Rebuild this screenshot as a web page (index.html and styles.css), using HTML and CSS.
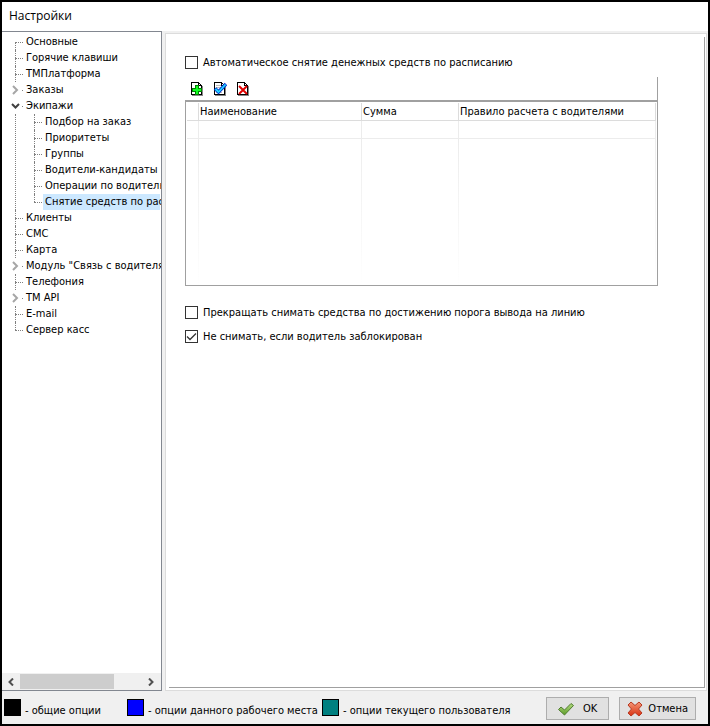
FILE: index.html
```html
<!DOCTYPE html>
<html lang="ru">
<head>
<meta charset="utf-8">
<title>Настройки</title>
<link rel="stylesheet" href="styles.css">
</head>
<body>
<div class="window">
  <header class="titlebar"><h1>Настройки</h1></header>
  <div class="body">
    <nav class="sidebar" aria-label="Разделы">
      <ul class="tree">
        <li><a href="#">Основные</a></li>
        <li><a href="#">Горячие клавиши</a></li>
        <li><a href="#">ТМПлатформа</a></li>
        <li class="parent"><svg class="chev closed" viewBox="0 0 9 10"><path d="M2 1l4 4-4 4"/></svg><a href="#">Заказы</a></li>
        <li class="parent"><svg class="chev" viewBox="0 0 9 10"><path d="M1 3l3.500 3.500L8 3"/></svg><a href="#">Экипажи</a>
          <ul class="branch">
            <li><a href="#">Подбор на заказ</a></li>
            <li><a href="#">Приоритеты</a></li>
            <li><a href="#">Группы</a></li>
            <li><a href="#">Водители-кандидаты</a></li>
            <li><a href="#">Операции по водителю</a></li>
            <li><a class="selected" href="#" aria-current="page">Снятие средств по рас</a></li>
          </ul>
        </li>
        <li><a href="#">Клиенты</a></li>
        <li><a href="#">СМС</a></li>
        <li><a href="#">Карта</a></li>
        <li class="parent"><svg class="chev closed" viewBox="0 0 9 10"><path d="M2 1l4 4-4 4"/></svg><a href="#">Модуль "Связь с водителя</a></li>
        <li><a href="#">Телефония</a></li>
        <li class="parent"><svg class="chev closed" viewBox="0 0 9 10"><path d="M2 1l4 4-4 4"/></svg><a href="#">TM API</a></li>
        <li><a href="#">E-mail</a></li>
        <li><a href="#">Сервер касс</a></li>
      </ul>
      <div class="scrollbar">
        <button type="button" aria-label="Влево"><svg viewBox="0 0 8 8"><path d="M6 0.500L2.500 4L6 7.500"/></svg></button>
        <div class="track"><div class="thumb"></div></div>
        <button type="button" aria-label="Вправо"><svg viewBox="0 0 8 8"><path d="M2 0.500L5.500 4L2 7.500"/></svg></button>
      </div>
    </nav>
    <main class="panel">
      <div class="page">
        <label class="check"><input type="checkbox">Автоматическое снятие денежных средств по расписанию</label>
        <div class="toolbar">
          <button type="button" aria-label="Добавить"><svg viewBox="0 0 14 14" shape-rendering="crispEdges"><path fill="#888" d="M2 13h11v1H2zM12 4h1v10h-1z"/><path fill="#000" d="M1 0h8v1h1v1h1v1h1v10H1z"/><path fill="#fff" d="M2 1h6v3h3v8H2zM9 2h1v1H9z"/><path fill="#008000" d="M5 3h4v3h3v4H9v3H5v-3H2V6h3z"/><path fill="#1f2" d="M6 4h2v3h3v2H8v3H6V9H3V7h3z"/></svg></button>
          <button type="button" aria-label="Изменить"><svg viewBox="0 0 14 14"><g shape-rendering="crispEdges"><path fill="#888" d="M2 13h11v1H2zM12 4h1v10h-1z"/><path fill="#000" d="M1 0h8v1h1v1h1v1h1v10H1z"/><path fill="#fff" d="M2 1h6v3h3v8H2zM9 2h1v1H9z"/><path fill="#bbb" d="M3 3h5v1H3zM3 5h6v1H3zM3 10h6v1H3z"/></g><path fill="none" stroke="#0030d0" stroke-width="3.500" d="M2 6.500l3.500 3.500 7.500-8"/><path fill="none" stroke="#20d8ff" stroke-width="1.800" d="M2.500 7l3 3 7-7.500"/></svg></button>
          <button type="button" aria-label="Удалить"><svg viewBox="0 0 14 14"><g shape-rendering="crispEdges"><path fill="#888" d="M2 13h11v1H2zM12 4h1v10h-1z"/><path fill="#000" d="M1 0h8v1h1v1h1v1h1v10H1z"/><path fill="#fff" d="M2 1h6v3h3v8H2zM9 2h1v1H9z"/></g><path stroke="#e00000" stroke-width="2" d="M3 4l8 8M11 4l-8 8"/></svg></button>
        </div>
        <div class="grid">
          <table>
            <colgroup><col class="c-mark"><col class="c-name"><col class="c-sum"><col></colgroup>
            <thead><tr><th></th><th>Наименование</th><th>Сумма</th><th>Правило расчета с водителями</th></tr></thead>
            <tbody><tr><td></td><td></td><td></td><td></td></tr><tr class="rest"><td></td><td></td><td></td><td></td></tr></tbody>
          </table>
        </div>
        <label class="check second"><input type="checkbox">Прекращать снимать средства по достижению порога вывода на линию</label>
        <label class="check third"><input type="checkbox" checked>Не снимать, если водитель заблокирован</label>
      </div>
    </main>
  </div>
  <footer class="footer">
    <ul class="legend">
      <li><span class="swatch common"></span>- общие опции</li>
      <li><span class="swatch local"></span>- опции данного рабочего места</li>
      <li><span class="swatch user"></span>- опции текущего пользователя</li>
    </ul>
    <div class="actions">
      <button type="button" class="ok"><svg viewBox="0 0 16 16"><defs><linearGradient id="g" x2="0" y2="1"><stop stop-color="#b4dc80"/><stop offset="1" stop-color="#5c9c28"/></linearGradient></defs><path fill="url(#g)" stroke="#507c30" d="M.500 8.500L3 6l3.500 3L13 2.500l2.500 2L6.500 14z"/></svg>OK</button>
      <button type="button" class="cancel"><svg viewBox="0 0 16 16"><defs><linearGradient id="r" x2="0" y2="1"><stop stop-color="#f49878"/><stop offset="1" stop-color="#d83010"/></linearGradient></defs><path fill="url(#r)" stroke="#b83820" stroke-linejoin="round" d="M4 1L8 4.500 12 1l3 3-3.500 4 3.500 4-3 3-4-3.500L4 15l-3-3 3.500-4L1 4z"/></svg>Отмена</button>
    </div>
  </footer>
</div>
</body>
</html>
```
FILE: styles.css
```css
* { box-sizing: border-box; }

body {
  margin: 0;
  font: 11px/16px "DejaVu Sans Condensed", Tahoma, sans-serif;
  color: #000;
}

.window {
  display: flex;
  flex-direction: column;
  min-height: 100vh;
  border: 2px solid #000;
  background: #f0f0f0;
}

.titlebar {
  padding: 5px 7px 6px;
  background: #fff;
}

h1 {
  margin: 0;
  font: 12px/18px "Open Sans", "Segoe UI", sans-serif;
}

ul { list-style: none; margin: 0; padding: 0; }
a { color: inherit; text-decoration: none; }
button { font: inherit; color: inherit; }

.body {
  flex: 1;
  display: flex;
  gap: 3px;
}

.sidebar {
  display: flex;
  flex-direction: column;
  width: 160px;
  flex: none;
  border: 1px solid #828790;
  border-left: 0;
}

.tree {
  flex: 1;
  padding: 2px 1px 0 13px;
  background: #fff;
  overflow: hidden;
  white-space: nowrap;
}

.tree li {
  position: relative;
  padding-left: 9px;
}

.tree li::before {
  content: "";
  position: absolute;
  left: 0;
  top: 0;
  height: 16px;
  border-left: 1px dotted #808080;
}

.tree li::after {
  content: "";
  position: absolute;
  left: 0;
  top: 8px;
  width: 8px;
  border-top: 1px dotted #808080;
}

.tree > li:first-child::before { top: 8px; height: 8px; }
.tree li:last-child::before { height: 8px; }
.tree > .parent::before { top: 16px; height: auto; bottom: 0; }
.tree > .parent::after { left: 7px; width: 1px; }

.tree a {
  display: block;
  padding-left: 2px;
}

.branch { padding-left: 10px; }
.selected { background: #cce8ff; }

.chev {
  position: absolute;
  left: -4px;
  top: 3px;
  width: 9px;
  height: 10px;
  fill: none;
  stroke: #404040;
  stroke-width: 2;
}
.chev.closed { stroke: #a6a6a6; }

.scrollbar {
  display: flex;
  height: 17px;
  padding: 1px 1px 1px 0;
  background: #f0f0f0;
}
.scrollbar button {
  display: grid;
  place-items: center;
  width: 18px;
  padding: 0;
  border: 0;
  background: none;
}
.scrollbar svg { width: 8px; height: 8px; fill: none; stroke: #505050; stroke-width: 2; }
.track { flex: 1; }
.thumb { width: 77%; height: 100%; background: #cdcdcd; }

.panel {
  flex: 1;
  min-width: 0;
  display: flex;
  margin: 2px 1px 0 0;
  padding: 3px 1px 2px 3px;
  border: 1px solid #dcdcdc;
  background: #fff;
}

.page {
  flex: 1;
  min-width: 0;
  padding: 18px 46px 0 16px;
  border: solid #a0a0a0;
  border-width: 0 1px 1px 0;
}

.check {
  display: flex;
  align-items: flex-start;
  gap: 5px;
}

.check input {
  appearance: none;
  width: 13px;
  height: 13px;
  margin: 1px 0 0;
  border: 1px solid #333;
  background: #fff;
}
.check input:checked {
  background: #fff url("data:image/svg+xml,%3Csvg xmlns='http://www.w3.org/2000/svg' viewBox='0 0 11 11'%3E%3Cpath d='M1 5.5l3 3 6-6' fill='none' stroke='%23333' stroke-width='1.3'/%3E%3C/svg%3E");
}

.second { margin-top: 19px; }
.third { margin-top: 8px; }

.toolbar {
  display: flex;
  gap: 9px;
  height: 23px;
  margin-top: 6px;
  padding: 5px 5px 0;
  border-right: 1px solid #a0a0a0;
}
.toolbar button { width: 14px; height: 14px; padding: 0; border: 0; background: none; }
.toolbar svg { display: block; width: 14px; height: 14px; }

.grid {
  padding: 1px 1px 0;
  border: 1px solid #a0a0a0;
  border-top-width: 2px;
}

table {
  width: 100%;
  table-layout: fixed;
  border-collapse: separate;
  border-spacing: 0;
}
.c-mark { width: 12px; }
.c-name { width: 163px; }
.c-sum { width: 97px; }

th, td {
  height: 18px;
  padding: 0 1px;
  border-right: 1px solid #dcdcdc;
  border-bottom: 1px solid #dcdcdc;
  font-weight: normal;
  text-align: left;
  white-space: nowrap;
}
td { border-color: #ececec; }
.rest td {
  height: 146px;
  border-bottom: 0;
  border-right: 1px solid;
  border-image: linear-gradient(#ececec, #fff) 1;
}

.footer {
  display: flex;
  justify-content: space-between;
  padding: 6px 12px 0 2px;
}

.legend { display: grid; grid-template-columns: 123px 195px auto; }
.legend li { display: flex; gap: 4px; line-height: 27px; white-space: nowrap; }
.swatch { width: 17px; height: 17px; margin-top: 2px; border: 1px solid #000; }
.common { background: #000; }
.local { background: #00f; }
.user { background: #008080; }

.actions { display: flex; gap: 10px; }
.actions button {
  display: flex;
  align-items: center;
  height: 23px;
  padding: 0 11px;
  border: 1px solid #adadad;
  background: #e1e1e1;
}
.actions svg { width: 16px; height: 16px; }
.actions .ok { gap: 9px; }
.actions .cancel { gap: 5px; padding: 0 7px; }
```
